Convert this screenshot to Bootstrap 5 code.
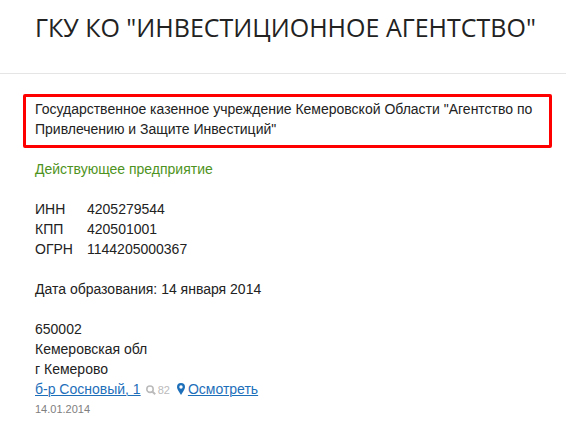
<!DOCTYPE html>
<html lang="ru">
<head>
<meta charset="utf-8">
<meta name="viewport" content="width=device-width, initial-scale=1">
<title>ГКУ КО "Инвестиционное агентство"</title>
<link href="https://cdn.jsdelivr.net/npm/bootstrap@5.3.0/dist/css/bootstrap.min.css" rel="stylesheet">
<style>
  body { font: 14px/20px "Liberation Sans", Arial, sans-serif; color: #222; background: #fff; }
  .page-head { padding: 9px 14px 28px 35px; border-bottom: 1px solid #e5e5e5; }
  .page-head h1 { font: 400 25px/36px "Open Sans", "Noto Sans", sans-serif; color: #222; }
  .full-name { margin: 20px 14px 0 23px; padding: 2px 9px 6px 9px; border: 3px solid #f00; border-radius: 2px; }
  .details { padding: 11px 14px 12px 35px; }
  .block-gap { margin-bottom: 20px; }
  .status { color: #4e9322; }
  .codes { grid-template-columns: 52px 1fr; }
  .details a { color: #1e6fba; text-decoration: underline; text-underline-offset: 1px; text-decoration-thickness: 1px; }
  .views { color: #bbb; font-size: 11px; margin: 0 7px 0 5px; padding-top: 2px; gap: 2px; }
  .pin { margin-right: 3px; }
  .updated { color: #808080; font-size: 11px; }
</style>
<script defer src="https://cdn.jsdelivr.net/npm/bootstrap@5.3.0/dist/js/bootstrap.bundle.min.js"></script>
</head>
<body>
<header class="page-head">
  <h1 class="m-0">ГКУ КО "ИНВЕСТИЦИОННОЕ АГЕНТСТВО"</h1>
</header>
<main>
  <p class="full-name">Государственное казенное учреждение Кемеровской Области "Агентство по Привлечению и Защите Инвестиций"</p>
  <div class="details">
    <p class="status block-gap">Действующее предприятие</p>
    <dl class="codes d-grid block-gap">
      <dt class="fw-normal">ИНН</dt><dd class="m-0">4205279544</dd>
      <dt class="fw-normal">КПП</dt><dd class="m-0">420501001</dd>
      <dt class="fw-normal">ОГРН</dt><dd class="m-0">1144205000367</dd>
    </dl>
    <p class="block-gap">Дата образования: 14 января 2014</p>
    <address class="m-0">
      650002<br>Кемеровская обл<br>г Кемерово
      <div class="d-flex align-items-center">
        <a href="#address">б-р Сосновый, 1</a>
        <span class="views d-inline-flex align-items-center lh-1">
          <svg width="10" height="10" viewBox="0 0 10 10" fill="none" stroke="#bbb" aria-hidden="true"><circle cx="4" cy="4.2" r="3.2" stroke-width="1.6"/><path d="M6.5 6.7 9.2 9.3" stroke-width="2"/></svg>
          <span>82</span>
        </span>
        <svg class="pin" width="8" height="12" viewBox="0 0 8 12" fill="#1e6fba" aria-hidden="true"><path fill-rule="evenodd" d="M4 0a4 4 0 0 1 4 4c0 1.5-.8 2.7-1.5 3.9L4 12 1.5 7.9C.8 6.7 0 5.5 0 4a4 4 0 0 1 4-4Zm0 2.3a1.7 1.7 0 1 0 0 3.4 1.7 1.7 0 0 0 0-3.4Z"/></svg>
        <a href="#map">Осмотреть</a>
      </div>
    </address>
    <time class="updated d-block" datetime="2014-01-14">14.01.2014</time>
  </div>
</main>
</body>
</html>
